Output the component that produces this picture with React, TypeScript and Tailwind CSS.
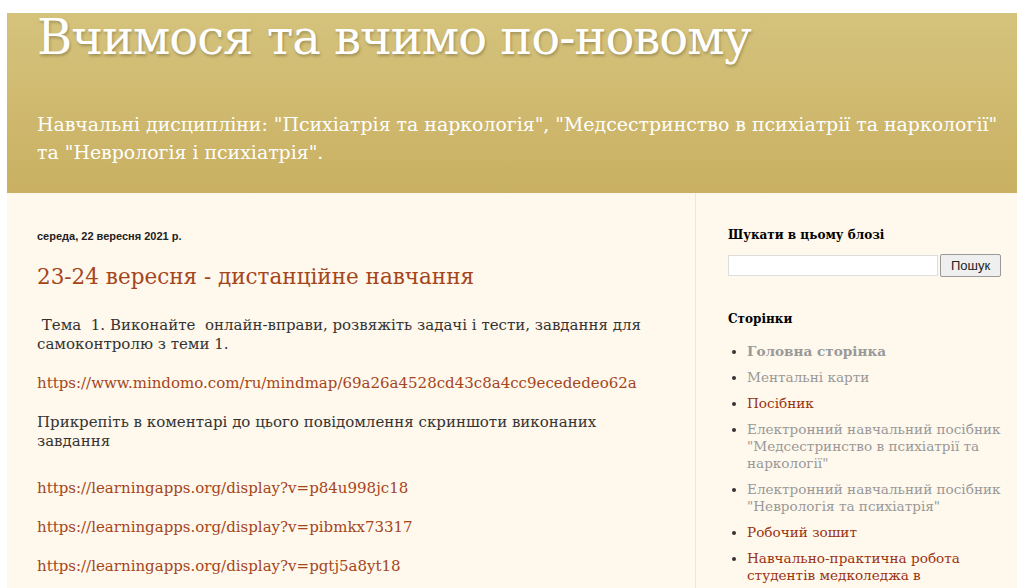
import React from 'react';

const serif = { fontFamily: '"DejaVu Serif", Georgia, serif' };
const sans = { fontFamily: '"Liberation Sans", Arial, sans-serif' };

const pages = [
  { label: 'Головна сторінка', tone: 'text-[#999] font-bold' },
  { label: 'Ментальні карти', tone: 'text-[#999]' },
  { label: 'Посібник', tone: 'text-[#993311]' },
  { label: 'Електронний навчальний посібник "Медсестринство в психіатрії та наркології"', tone: 'text-[#999]' },
  { label: 'Електронний навчальний посібник "Неврологія та психіатрія"', tone: 'text-[#999]' },
  { label: 'Робочий зошит', tone: 'text-[#993311]' },
  { label: 'Навчально-практична робота студентів медколеджа в', tone: 'text-[#993311]' },
];

const links = [
  'https://learningapps.org/display?v=p84u998jc18',
  'https://learningapps.org/display?v=pibmkx73317',
  'https://learningapps.org/display?v=pgtj5a8yt18',
];

const Header = () => (
  <header className="h-[180px] bg-gradient-to-b from-[#d5c37c] to-[#c9b062] pl-[30px] text-white">
    <h1
      className="text-[48px] leading-[48px] tracking-[-1px] [text-shadow:1px_2px_3px_rgba(0,0,0,0.25)]"
      style={serif}
    >
      Вчимося та вчимо по-новому
    </h1>
    <p className="mt-[49px] w-[972px] text-[18.9px] leading-[28px]" style={serif}>
      Навчальні дисципліни: "Психіатрія та наркологія", "Медсестринство в психіатрії та наркології" та "Неврологія і психіатрія".
    </p>
  </header>
);

const Post = () => (
  <main className="w-[689px] shrink-0 border-r border-[#efe6d6] pl-[30px] pr-[40px] pt-[35px]">
    <h2 className="text-[11px] font-bold text-[#222]" style={sans}>
      середа, 22 вересня 2021 р.
    </h2>
    <h3 className="mt-[18px] text-[21.5px] leading-[28px] text-[#a4461c]" style={serif}>
      23-24 вересня - дистанційне навчання
    </h3>
    <div className="mt-[25px] text-[15px] leading-[19px] text-[#333]" style={serif}>
      <p>&nbsp;Тема&nbsp; 1. Виконайте&nbsp; онлайн-вправи, розвяжіть задачі і тести, завдання для самоконтролю з теми 1.</p>
      <p className="mt-[20px]">
        <a className="text-[#a4461c]" href="#">https://www.mindomo.com/ru/mindmap/69a26a4528cd43c8a4cc9ecededeo62a</a>
      </p>
      <p className="mt-[20px]">Прикрепіть в коментарі до цього повідомлення скриншоти виконаних завдання</p>
      {links.map((href, i) => (
        <p key={href} className={i === 0 ? 'mt-[28px]' : 'mt-[20px]'}>
          <a className="text-[#a4461c]" href="#">{href}</a>
        </p>
      ))}
    </div>
  </main>
);

const Sidebar = () => (
  <aside className="flex-1 pl-[32px] pr-[10px] pt-[33px]" style={serif}>
    <h2 className="text-[12px] font-bold text-[#000]">Шукати в цьому блозі</h2>
    <div className="mt-[10px] flex items-center gap-[2px]">
      <input className="h-[21px] w-[210px] border border-[#ddd] bg-white" />
      <button
        className="h-[23px] rounded-[2px] border border-[#999] bg-[#efefef] px-[10px] text-[13px] text-[#222]"
        style={sans}
      >
        Пошук
      </button>
    </div>
    <h2 className="mt-[33px] text-[12px] font-bold text-[#000]">Сторінки</h2>
    <ul className="mt-[15px] list-disc pl-[19px] text-[13.6px] leading-[17px] marker:text-[#333]">
      {pages.map((p) => (
        <li key={p.label} className={`mb-[9px] ${p.tone}`}>
          {p.label}
        </li>
      ))}
    </ul>
  </aside>
);

export default function App() {
  return (
    <div className="h-[588px] overflow-hidden bg-white pl-[7px] pt-[13px]">
      <Header />
      <div className="flex h-full bg-[#fff8ec]">
        <Post />
        <Sidebar />
      </div>
    </div>
  );
}
